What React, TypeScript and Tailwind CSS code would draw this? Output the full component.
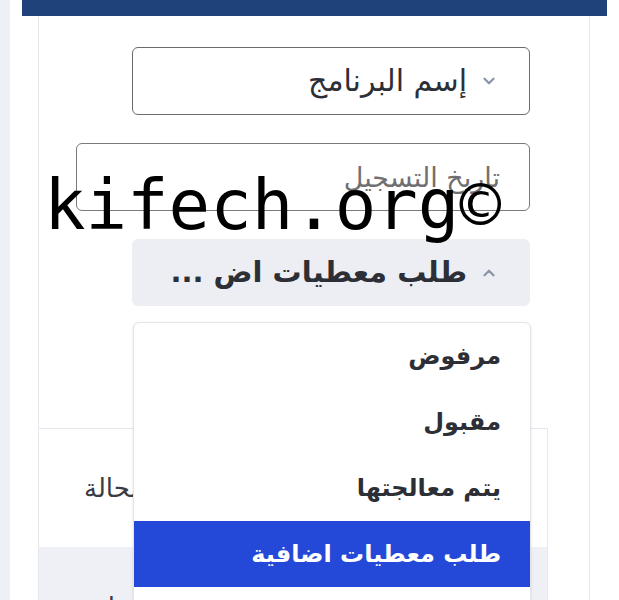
import { ChevronDown, ChevronUp } from "lucide-react";

const options = ["مرفوض", "مقبول", "يتم معالجتها", "طلب معطيات اضافية", "الكل"];

export default function App() {
  const selected = "طلب معطيات اضافية";

  return (
    <div className="relative flex min-h-[600px] overflow-hidden bg-white font-['DejaVu_Sans',sans-serif] text-[#2d2f36]">
      <div className="w-[10px] shrink-0 bg-[#edf0f5]" />
      <div className="flex-1 px-[12px]">
        <div className="h-[16px] bg-[#1e4279]" />
        <div className="mx-[16px] mr-[17px] border-x border-[#e6e8ee] pb-0">
          <div dir="rtl" className="relative flex flex-col items-start gap-[28px] pt-[31px] pr-[59px] pb-[122px]">
            <div className="flex h-[68px] w-[398px] items-center gap-[13px] rounded-[6px] border border-[#6b6b6b] pr-[31px]">
              <ChevronDown className="size-[18px] text-[#8b94a8]" strokeWidth={3} />
              <span className="text-[30px] leading-none">إسم البرنامج</span>
            </div>
            <div className="flex h-[68px] w-[454px] items-center rounded-[6px] border border-[#7a7a7a] pr-[29px]">
              <span className="text-[27px] leading-none text-[#707070]">تاريخ التسجيل</span>
            </div>
            <div className="flex h-[67px] w-[398px] items-center gap-[13px] rounded-[6px] bg-[#eceef4] pr-[32px]">
              <ChevronUp className="size-[18px] text-[#8b94a8]" strokeWidth={3} />
              <span className="text-[29px] leading-none font-bold">طلب معطيات اض ...</span>
            </div>

            <div className="absolute top-[306px] right-[58px] z-20 w-[398px] overflow-hidden rounded-[6px] border border-[#e3e5ea] bg-white shadow-sm">
              {options.map((o) => (
                <div
                  key={o}
                  className={
                    o === selected
                      ? "flex h-[66px] items-center bg-[#2449d8] pr-[29px] text-[24px] font-bold text-white"
                      : "flex h-[66px] items-center pr-[29px] text-[24px] font-bold text-[#2d2f36]"
                  }
                >
                  {o}
                </div>
              ))}
            </div>
          </div>

          <div dir="rtl" className="mr-[41px] border-t border-r border-[#e6e8ee]">
            <div className="flex h-[118px] items-center justify-end pl-[45px]">
              <span className="text-[26px] text-[#3a3c44]">الحالة</span>
            </div>
            <div className="flex h-[80px] items-end justify-end bg-[#eef0f5] pl-[57px]">
              <span className="text-[26px] text-[#3a3c44]">التسجيل</span>
            </div>
          </div>
        </div>
      </div>

      <div className="pointer-events-none absolute top-[171px] left-[44px] z-30 font-['DejaVu_Sans_Mono',monospace] text-[69px] leading-none text-black">
        kifech.org©
      </div>
    </div>
  );
}
